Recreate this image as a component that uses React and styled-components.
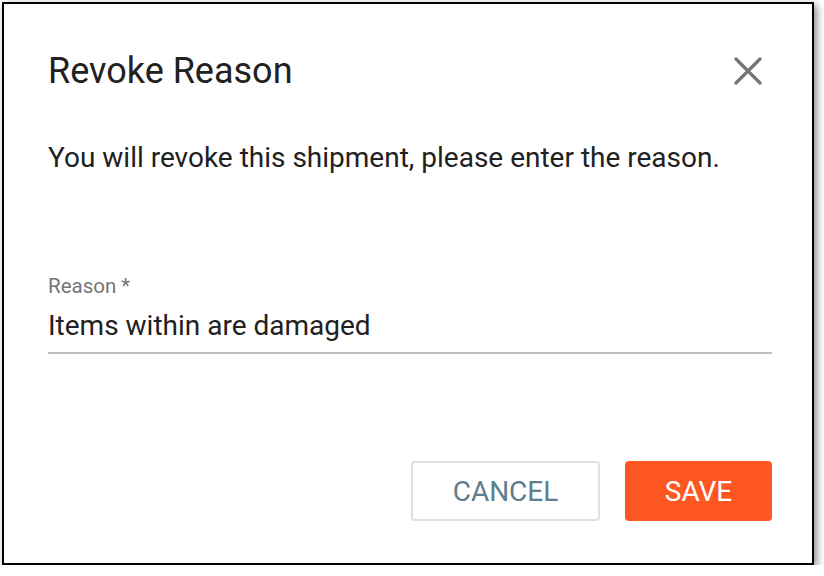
import React from "react";
import styled, { createGlobalStyle } from "styled-components";

const Global = createGlobalStyle`
  html, body { margin: 0; padding: 0; background: #fff; }
  body { font-family: Roboto, "Liberation Sans", sans-serif; }
  * { box-sizing: border-box; }
`;

const Frame = styled.div`
  margin: 2px 0 0 2px;
  width: 812px;
  height: 563px;
  border: 2px solid #000;
  background: #fff;
  box-shadow: 3px 3px 8px rgba(0, 0, 0, 0.45);
  padding: 0 40px 0 44px;
  display: flex;
  flex-direction: column;
`;

const Header = styled.div`
  display: flex;
  align-items: center;
  justify-content: space-between;
  height: 36px;
  margin-top: 49px;
`;

const Title = styled.h2`
  margin: 0;
  font-size: 36px;
  line-height: 36px;
  font-weight: 400;
  color: #212121;
`;

const CloseButton = styled.button`
  border: 0;
  background: none;
  padding: 0;
  margin-right: 10px;
  width: 28px;
  height: 28px;
  display: flex;
  cursor: pointer;
`;

const Message = styled.p`
  margin: 55px 0 0;
  font-size: 28px;
  line-height: 28px;
  color: #212121;
`;

const Field = styled.div`
  margin-top: 104px;
  display: flex;
  flex-direction: column;
`;

const Label = styled.label`
  font-size: 20.5px;
  line-height: 20px;
  color: #757575;
`;

const Input = styled.input`
  border: 0;
  border-bottom: 2px solid #bdbdbd;
  height: 58px;
  padding: 15px 0 13px;
  font-family: inherit;
  font-size: 28px;
  line-height: 28px;
  color: #212121;
  outline: none;
  background: transparent;
`;

const Actions = styled.div`
  margin-top: auto;
  margin-bottom: 42px;
  display: flex;
  justify-content: flex-end;
  gap: 25px;
`;

const Button = styled.button`
  height: 60px;
  border-radius: 4px;
  font-family: inherit;
  font-size: 28px;
  cursor: pointer;
  padding: 0;
  width: ${(p) => (p.$primary ? "147px" : "189px")};
  border: ${(p) => (p.$primary ? "0" : "2px solid #e0e0e0")};
  background: ${(p) => (p.$primary ? "#ff5722" : "#fff")};
  color: ${(p) => (p.$primary ? "#fff" : "#607d8b")};
`;

export default function App() {
  return (
    <>
      <Global />
      <Frame>
        <Header>
          <Title>Revoke Reason</Title>
          <CloseButton aria-label="close">
            <svg width="28" height="28" viewBox="0 0 28 28">
              <path d="M2 2 L26 26 M26 2 L2 26" stroke="#757575" strokeWidth="3.2" strokeLinecap="round" />
            </svg>
          </CloseButton>
        </Header>
        <Message>You will revoke this shipment, please enter the reason.</Message>
        <Field>
          <Label>Reason *</Label>
          <Input defaultValue="Items within are damaged" />
        </Field>
        <Actions>
          <Button>CANCEL</Button>
          <Button $primary>SAVE</Button>
        </Actions>
      </Frame>
    </>
  );
}
